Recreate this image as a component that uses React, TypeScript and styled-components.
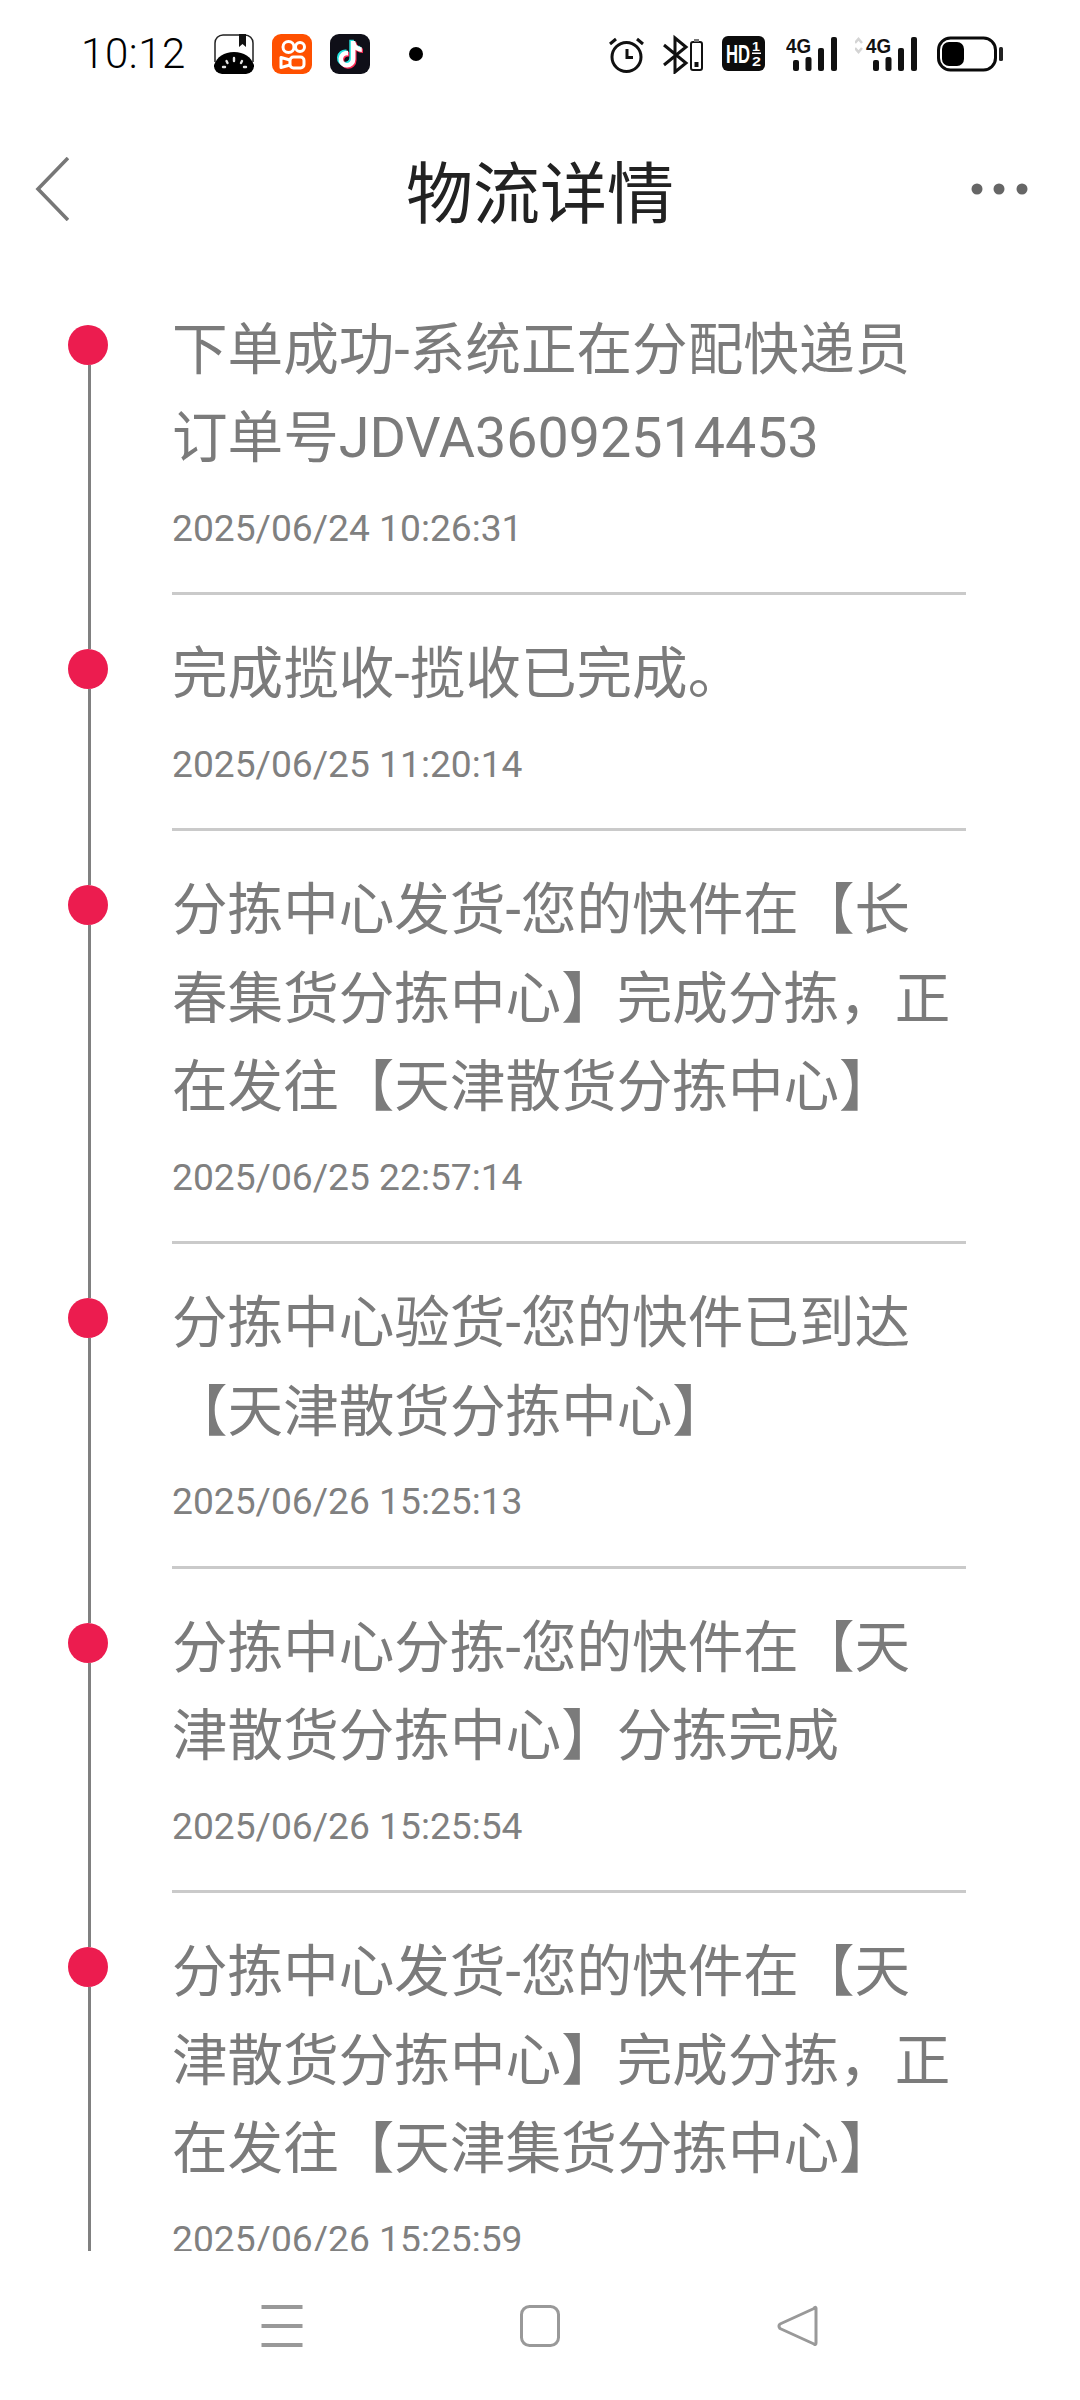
import React from "react";
import styled, { createGlobalStyle } from "styled-components";

const Global = createGlobalStyle`
  html, body { margin: 0; padding: 0; background: #fff; }
  * { box-sizing: border-box; }
`;

const Screen = styled.div`
  width: 1080px;
  height: 2400px;
  display: flex;
  flex-direction: column;
  overflow: hidden;
  background: #fff;
  font-family: Roboto, "Noto Sans CJK SC", sans-serif;
`;

const StatusBar = styled.div`
  flex: 0 0 107px;
  display: flex;
  align-items: flex-start;
  justify-content: space-between;
  padding: 34px 77px 0 81px;
`;

const StatusGroup = styled.div<{ $gap: number }>`
  display: flex;
  align-items: center;
  height: 40px;
  gap: ${(p) => p.$gap}px;
`;

const Clock = styled.span`
  font-size: 42px;
  line-height: 40px;
  font-weight: 300;
  color: #000;
  width: 103px;
  letter-spacing: 0.6px;
  white-space: nowrap;
  margin-right: 12px;
`;

const StatusIcon = styled.svg`
  display: block;
  height: 40px;
  flex: none;
`;

const Header = styled.header`
  flex: 0 0 163.5px;
  display: grid;
  grid-template-columns: 1fr auto 1fr;
  align-items: center;
`;

const BackIcon = styled.svg`
  display: block;
  margin-left: 34px;
`;

const Title = styled.h1`
  margin: 0;
  font-size: 67px;
  line-height: 90px;
  font-weight: 400;
  color: #222;
  font-family: "Noto Sans CJK SC", sans-serif;
`;

const MoreIcon = styled.svg`
  display: block;
  justify-self: end;
  margin-right: 50px;
`;

const Timeline = styled.main`
  flex: 0 0 1980.5px;
  overflow: hidden;
`;

const Item = styled.section`
  display: flex;
  align-items: stretch;
`;

const Rail = styled.div`
  flex: 0 0 40px;
  margin: 0 64px 0 68px;
  display: flex;
  flex-direction: column;
  align-items: flex-start;
`;

const RailLine = styled.span<{ $hidden?: boolean }>`
  width: 3px;
  margin-left: 20px;
  background: ${(p) => (p.$hidden ? "transparent" : "#808080")};
`;

const RailTop = styled(RailLine)`
  flex: 0 0 54px;
`;

const RailBottom = styled(RailLine)`
  flex: 1 1 auto;
`;

const Dot = styled.span`
  flex: 0 0 40px;
  width: 40px;
  height: 40px;
  border-radius: 50%;
  background: #ec1c4f;
`;

const Body = styled.div`
  width: 794px;
  padding-top: 35px;
  padding-bottom: 41.5px;
  border-bottom: 3px solid #cacaca;
`;

const Message = styled.p`
  margin: 0;
  width: 785px;
  font-size: 55.6px;
  line-height: 88.5px;
  font-weight: 400;
  color: #7b7b7b;
  text-spacing-trim: space-all;
`;

const Stamp = styled.div`
  margin-top: 22px;
  font-size: 37.2px;
  line-height: 46px;
  color: #808080;
`;

const NavBar = styled.nav`
  flex: 1 1 auto;
  display: flex;
  align-items: center;
  justify-content: center;
  gap: 214px;
`;

const NavIcon = styled.svg`
  display: block;
  flex: none;
`;

const events = [
  { text: "", time: "2025/06/24 10:26:31", lines: ["下单成功-系统正在分配快递员", "订单号JDVA36092514453"] },
  { text: "完成揽收-揽收已完成。", time: "2025/06/25 11:20:14" },
  { text: "分拣中心发货-您的快件在【长春集货分拣中心】完成分拣，正在发往【天津散货分拣中心】", time: "2025/06/25 22:57:14" },
  { text: "分拣中心验货-您的快件已到达【天津散货分拣中心】", time: "2025/06/26 15:25:13" },
  { text: "分拣中心分拣-您的快件在【天津散货分拣中心】分拣完成", time: "2025/06/26 15:25:54" },
  { text: "分拣中心发货-您的快件在【天津散货分拣中心】完成分拣，正在发往【天津集货分拣中心】", time: "2025/06/26 15:25:59" },
];

const TIKTOK =
  "M448,209.91a210.06,210.06,0,0,1-122.77-39.25V349.38A162.55,162.55,0,1,1,185,188.31V278.2a74.62,74.62,0,1,0,52.23,71.18V0l88,0a121.18,121.18,0,0,0,1.86,22.17h0A122.18,122.18,0,0,0,381,102.39a121.43,121.43,0,0,0,67,20.14Z";

const Bars = ({ x }: { x: number }) => (
  <g fill="#111">
    <rect x={x} y="60" width="6" height="11" rx="2" />
    <rect x={x + 12.5} y="57" width="6" height="14" rx="2" />
    <rect x={x + 25} y="48" width="6" height="23" rx="2" />
    <rect x={x + 38} y="37" width="6" height="34" rx="2" />
  </g>
);

const FourG = ({ x }: { x: number }) => (
  <text x={x} y="53" fontFamily="'Liberation Sans', sans-serif" fontSize="21" fontWeight="700" fill="#111" textLength="25" lengthAdjust="spacingAndGlyphs">
    4G
  </text>
);

export default function App() {
  return (
    <Screen>
      <Global />
      <StatusBar>
        <StatusGroup $gap={18}>
          <Clock>10:12</Clock>
          <StatusIcon width="40" viewBox="0 0 40 40">
            <path d="M1 28 V9 a8 8 0 0 1 8-8 h22 a8 8 0 0 1 8 8 v19" fill="#fff" stroke="#222" strokeWidth="1.5" />
            <path d="M0 31 C3 23 10 18 20 18 C30 18 37 23 40 31 a8.500 8.500 0 0 1-8 9 H8 a8.500 8.500 0 0 1-8-9Z" fill="#000" />
            <path d="M25 0 h7 v13 l-3.500-3 -3.500 3z" fill="#111" />
            <g stroke="#e4e4e4" strokeWidth="2.400" strokeLinecap="round">
              <path d="M20 24 v3" />
              <path d="M12.500 27 l1 2" />
              <path d="M28 27 l-1 2" />
              <path d="M9 33 h2" />
              <path d="M30 33 h2" />
            </g>
          </StatusIcon>
          <StatusIcon width="40" viewBox="0 0 40 40">
            <rect width="40" height="40" rx="9" fill="#ff5000" />
            <g fill="none" stroke="#fff" strokeWidth="3">
              <circle cx="16.500" cy="13" r="5.500" />
              <circle cx="28" cy="13" r="4.500" />
              <rect x="18" y="23" width="14" height="11" rx="3.500" />
              <path d="M18 26 l-9-2.500 v10 l9-2.500" strokeLinejoin="round" />
            </g>
          </StatusIcon>
          <StatusIcon width="40" viewBox="0 0 40 40">
            <rect width="40" height="40" rx="9" fill="#0f0f18" />
            <g transform="translate(8.500 7) scale(0.052)">
              <path d={TIKTOK} fill="#25e4e0" transform="translate(-30 -24)" />
              <path d={TIKTOK} fill="#fe2c55" transform="translate(22 22)" />
              <path d={TIKTOK} fill="#fff" />
            </g>
          </StatusIcon>
          <StatusIcon width="35" viewBox="388 34 35 40">
            <circle cx="416" cy="54" r="7" fill="#000" />
          </StatusIcon>
        </StatusGroup>
        <StatusGroup $gap={17}>
          <StatusIcon width="37" viewBox="608 34 37 40">
            <circle cx="626.500" cy="57" r="14.500" fill="none" stroke="#111" strokeWidth="3" />
            <path d="M627 49 v8.500 h6" fill="none" stroke="#111" strokeWidth="3" />
            <path d="M610 44 l6-5 M643 44 l-6-5" stroke="#111" strokeWidth="3" />
          </StatusIcon>
          <StatusIcon width="43" viewBox="662 34 43 40">
            <path d="M664 45 l22 18 -11 9 v-34 l11 9 -22 18" fill="none" stroke="#111" strokeWidth="3" />
            <rect x="691" y="42" width="11" height="28" rx="2" fill="none" stroke="#111" strokeWidth="2" />
            <rect x="694" y="39" width="5" height="3" fill="#777" />
            <rect x="694.500" y="62" width="4" height="5" fill="#111" />
          </StatusIcon>
          <StatusIcon width="47" viewBox="722 34 47 40">
            <rect x="722" y="36" width="43" height="35" rx="6" fill="#0c0c0c" />
            <text x="726" y="63" fontFamily="'Liberation Sans', sans-serif" fontSize="25" fontWeight="700" fill="#fff" textLength="24" lengthAdjust="spacingAndGlyphs">HD</text>
            <text x="752" y="51" fontFamily="'Liberation Sans', sans-serif" fontSize="13" fontWeight="700" fill="#fff" textLength="8" lengthAdjust="spacingAndGlyphs">1</text>
            <text x="752" y="66" fontFamily="'Liberation Sans', sans-serif" fontSize="13" fontWeight="700" fill="#fff" textLength="9" lengthAdjust="spacingAndGlyphs">2</text>
            <rect x="752" y="52.500" width="9" height="1.500" fill="#fff" />
          </StatusIcon>
          <StatusIcon width="52" viewBox="786 34 52 40">
            <FourG x={786} />
            <Bars x={793} />
          </StatusIcon>
          <StatusIcon width="65" viewBox="855 34 65 40">
            <path d="M855 43 l3.500-4 3.500 4 M855 48 l3.500 4 3.500-4" fill="none" stroke="#d4d4d4" strokeWidth="2.500" />
            <FourG x={866} />
            <Bars x={873} />
          </StatusIcon>
          <StatusIcon width="66" viewBox="937 34 66 40">
            <rect x="938.500" y="38" width="57" height="32" rx="12" fill="none" stroke="#0a0a0a" strokeWidth="3" />
            <rect x="942" y="42" width="22" height="24" rx="7" fill="#000" />
            <rect x="999" y="47" width="4" height="14" rx="1.500" fill="#222" />
          </StatusIcon>
        </StatusGroup>
      </StatusBar>

      <Header>
        <BackIcon width="35" height="64" viewBox="34 156 35 64">
          <path d="M68 157 L38 188 L68 219" fill="none" stroke="#777" strokeWidth="3.600" />
        </BackIcon>
        <Title>物流详情</Title>
        <MoreIcon width="60" height="14" viewBox="970 182 60 14">
          <circle cx="977" cy="189" r="5.500" fill="#666" />
          <circle cx="999" cy="189" r="5.500" fill="#666" />
          <circle cx="1022" cy="189" r="5.500" fill="#666" />
        </MoreIcon>
      </Header>

      <Timeline>
        {events.map((e, i) => (
          <Item key={e.time}>
            <Rail>
              <RailTop $hidden={i === 0} />
              <Dot />
              <RailBottom />
            </Rail>
            <Body>
              <Message>
                {e.lines ? e.lines.map((l, k) => <React.Fragment key={l}>{k > 0 && <br />}{l}</React.Fragment>) : e.text}
              </Message>
              <Stamp>{e.time}</Stamp>
            </Body>
          </Item>
        ))}
      </Timeline>

      <NavBar>
        <NavIcon width="44" height="44" viewBox="0 0 44 44">
          <g fill="#999">
            <rect x="1.500" y="1" width="41" height="4" />
            <rect x="1.500" y="20" width="41" height="4" />
            <rect x="1.500" y="39" width="41" height="4" />
          </g>
        </NavIcon>
        <NavIcon width="44" height="44" viewBox="0 0 44 44">
          <rect x="3.500" y="2.500" width="37" height="39" rx="8" fill="none" stroke="#999" strokeWidth="3" />
        </NavIcon>
        <NavIcon width="44" height="44" viewBox="0 0 44 44">
          <path d="M38 4.500 Q39 2.500 40 4 V39 Q40 41.500 38 40 L4 24.500 Q2 22 4 20z" fill="none" stroke="#999" strokeWidth="3" strokeLinejoin="round" />
        </NavIcon>
      </NavBar>
    </Screen>
  );
}
